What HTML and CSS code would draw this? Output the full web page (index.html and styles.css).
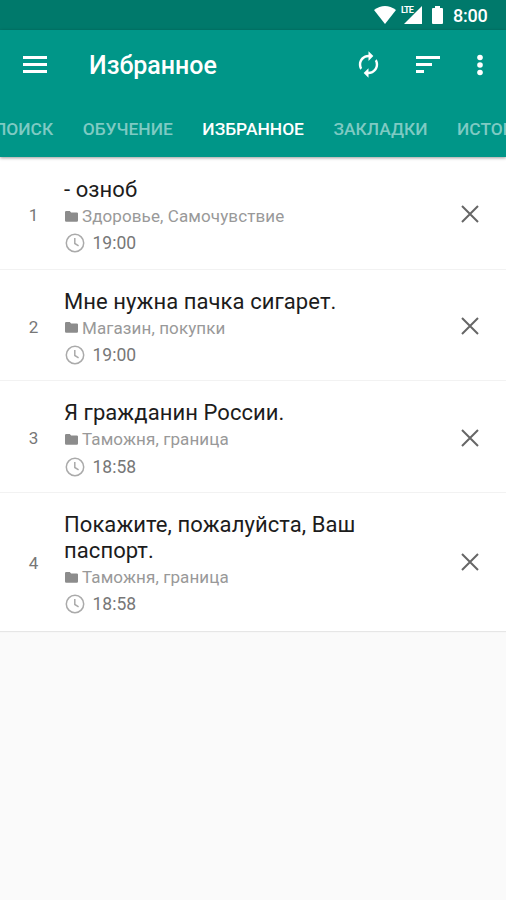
FILE: index.html
```html
<!DOCTYPE html>
<html lang="ru">
<head>
    <meta charset="UTF-8">
    <meta name="viewport" content="width=device-width, initial-scale=1.0">
    <title>Избранное</title>
    <link rel="stylesheet" href="styles.css">
</head>
<body>

    <div class="status-bar">
        <svg class="wifi" width="22" height="18" viewBox="0 0 22 18"><path d="M11 18 0 4Q11-4 22 4Z"/></svg>
        <div class="signal">
            <span class="lte">LTE</span>
            <svg width="18" height="18" viewBox="0 0 18 18"><path d="M0 18 18 0V18Z"/></svg>
        </div>
        <svg class="battery" width="11" height="18" viewBox="0 0 11 18"><path d="M3 0h5v2h2q1 0 1 1v14q0 1-1 1H1q-1 0-1-1V3q0-1 1-1h2z"/></svg>
        <span class="clock">8:00</span>
    </div>

    <header class="header">
        <div class="toolbar">
            <svg class="menu" width="24" height="17" viewBox="0 0 24 17"><path d="M0 0h24v3H0zM0 7h24v3H0zM0 14h24v3H0z"/></svg>
            <h1>Избранное</h1>
            <svg class="sync" width="29" height="29" viewBox="0 0 24 24"><path d="M12 6v3l4-4-4-4v3c-4.42 0-8 3.58-8 8 0 1.57.46 3.03 1.24 4.26L6.7 14.8c-.45-.83-.7-1.79-.7-2.8 0-3.31 2.69-6 6-6zm6.76 1.74L17.3 9.2c.44.84.7 1.79.7 2.8 0 3.31-2.69 6-6 6v-3l-4 4 4 4v-3c4.42 0 8-3.58 8-8 0-1.57-.46-3.03-1.24-4.26z"/></svg>
            <svg class="sort" width="24" height="17" viewBox="0 0 24 17"><path d="M0 0h24v3H0zM0 7h16v3H0zM0 14h8v3H0z"/></svg>
            <svg class="more" width="6" height="22" viewBox="0 0 6 22"><circle cx="3" cy="3.5" r="2.8"/><circle cx="3" cy="11" r="2.8"/><circle cx="3" cy="18.5" r="2.8"/></svg>
        </div>
        <nav class="tabs">
            <span>ПОИСК</span>
            <span>ОБУЧЕНИЕ</span>
            <span class="active">ИЗБРАННОЕ</span>
            <span>ЗАКЛАДКИ</span>
            <span>ИСТОРИЯ</span>
        </nav>
    </header>

    <!-- Иконки списка -->
    <svg class="icons">
        <symbol id="folder" viewBox="0 0 13 11"><path d="M1.2 0h3.6l1.3 1.4h5.7q1.2 0 1.2 1.2v7q0 1.2-1.2 1.2H1.2Q0 10.8 0 9.6V1.2Q0 0 1.2 0z"/></symbol>
        <symbol id="time" viewBox="0 0 20 20"><circle cx="10" cy="10" r="8.7"/><path d="M9.8 5v5.5l3.8 2.3"/></symbol>
        <symbol id="close" viewBox="0 0 18 18"><path d="M1 1l16 16M17 1L1 17"/></symbol>
    </svg>

    <main class="list">
        <div class="item">
            <span class="number">1</span>
            <div class="info">
                <h2>- озноб</h2>
                <p class="category"><svg><use href="#folder"/></svg>Здоровье, Самочувствие</p>
                <p class="time"><svg><use href="#time"/></svg>19:00</p>
            </div>
            <svg class="close"><use href="#close"/></svg>
        </div>
        <div class="item">
            <span class="number">2</span>
            <div class="info">
                <h2>Мне нужна пачка сигарет.</h2>
                <p class="category"><svg><use href="#folder"/></svg>Магазин, покупки</p>
                <p class="time"><svg><use href="#time"/></svg>19:00</p>
            </div>
            <svg class="close"><use href="#close"/></svg>
        </div>
        <div class="item">
            <span class="number">3</span>
            <div class="info">
                <h2>Я гражданин России.</h2>
                <p class="category"><svg><use href="#folder"/></svg>Таможня, граница</p>
                <p class="time"><svg><use href="#time"/></svg>18:58</p>
            </div>
            <svg class="close"><use href="#close"/></svg>
        </div>
        <div class="item">
            <span class="number">4</span>
            <div class="info">
                <h2>Покажите, пожалуйста, Ваш паспорт.</h2>
                <p class="category"><svg><use href="#folder"/></svg>Таможня, граница</p>
                <p class="time"><svg><use href="#time"/></svg>18:58</p>
            </div>
            <svg class="close"><use href="#close"/></svg>
        </div>
    </main>

</body>
</html>
```
FILE: styles.css
```css
* { box-sizing: border-box; }
body { font-family: Roboto, Arial, sans-serif; background-color: #fafafa; margin: 0; min-height: 900px; overflow: hidden; }
h1, h2, p { margin: 0; font-weight: normal; }
svg { flex: none; }

.status-bar { display: flex; align-items: center; justify-content: flex-end; height: 30px; padding-right: 18px; background-color: #00796b; color: #fff; }
.status-bar svg { display: block; fill: #fff; }
.signal { display: flex; align-items: flex-end; margin: 0 10px 0 5px; }
.signal svg { margin-left: -9px; }
.lte { align-self: flex-start; font-size: 9px; line-height: 9px; font-weight: bold; letter-spacing: -0.8px; }
.clock { margin-left: 10px; width: 35px; font-size: 18px; font-weight: 500; letter-spacing: -0.2px; white-space: nowrap; }

.header { height: 127px; background-color: #009688; color: #fff; position: relative; box-shadow: 0 1px 3px rgba(0,0,0,0.4); }
.header svg { fill: #fff; }
.toolbar { display: flex; align-items: center; height: 69px; padding: 0 23px; }
.toolbar h1 { flex: 1; margin: 2px 0 0 42px; font-size: 25px; font-weight: 500; }
.sort { margin: 0 37px 0 33px; }
.tabs { display: flex; gap: 29.6px; height: 58px; line-height: 60px; margin-left: -6px; overflow: hidden; font-size: 17.4px; font-weight: 500; white-space: nowrap; color: #7fcac3; }
.tabs .active { color: #fff; }

.icons { display: none; }
.list { background-color: #fff; box-shadow: 0 1px 1px rgba(0,0,0,0.08); }
.item { display: flex; align-items: center; padding-right: 27px; border-bottom: 1px solid #f2f2f2; }
.item:first-child { padding-top: 1px; }
.item:last-child { border-bottom: none; padding-bottom: 1px; }
.number { width: 67px; padding-top: 3px; text-align: center; font-size: 17px; color: #777; }
.info { flex: 1; margin-left: -3px; padding: 19px 0 11px; }
.info h2 { width: 310px; font-size: 22px; line-height: 26px; letter-spacing: 0.07px; color: #1c1c1c; }
.category { display: flex; align-items: center; height: 26px; font-size: 17px; letter-spacing: 0.1px; color: #999; }
.category svg { width: 13px; height: 11px; margin: 0 4px 0 1px; fill: #8c8c8c; }
.time { display: flex; align-items: center; height: 28.7px; font-size: 17.5px; color: #777; }
.time svg { width: 20px; height: 20px; margin: 0 7.5px 0 1px; fill: none; stroke: #aaa; stroke-width: 1.5; }
.close { width: 18px; height: 18px; margin-top: 2px; fill: none; stroke: #666; stroke-width: 2; }
```
